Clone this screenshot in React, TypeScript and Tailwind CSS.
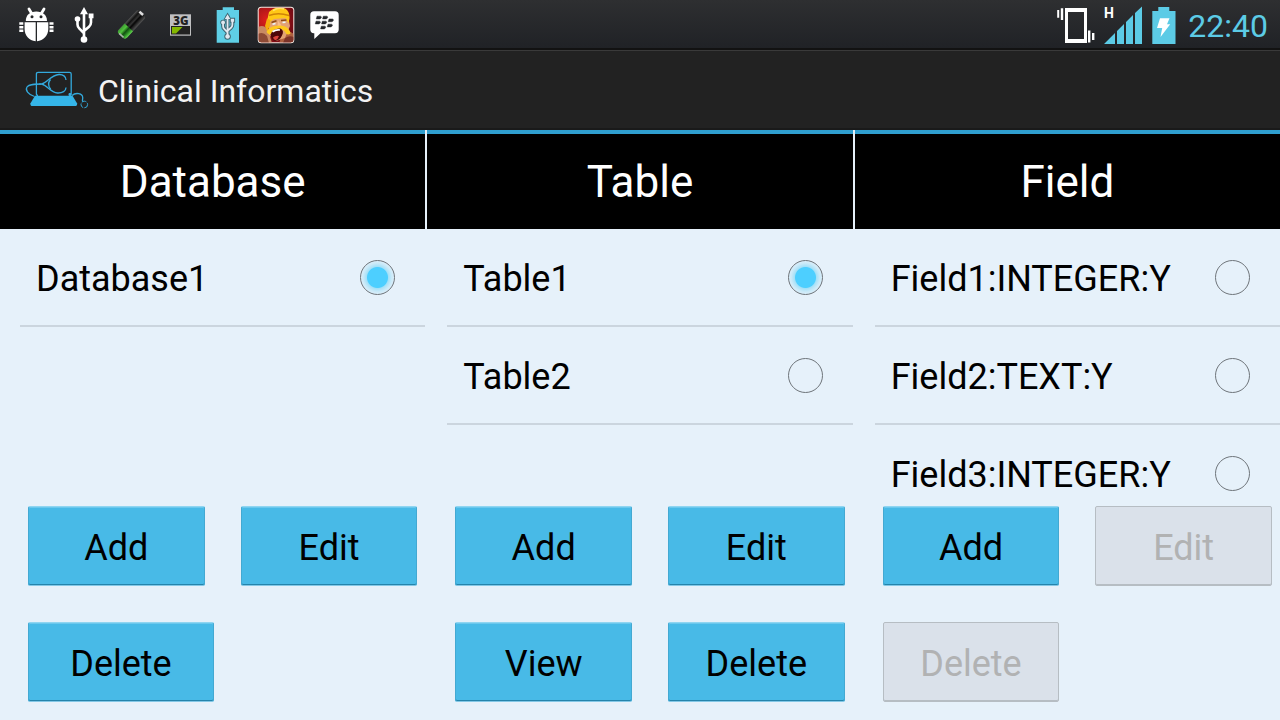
import { useState } from 'react';

const ICON = 'h-12 w-12 shrink-0';

function BugIcon() {
  return (
    <svg viewBox="0 0 48 48" className={ICON} fill="#fff" aria-hidden="true">
      <path d="M17 8l3 5M32 8l-3 5" stroke="#fff" strokeWidth="2.800" strokeLinecap="round" />
      <path d="M13.800 20c0-6 4.200-9.500 10.500-9.500S35 14 35 20z" />
      <circle cx="20" cy="15.800" r="1.500" fill="#26282a" />
      <circle cx="29" cy="15.800" r="1.500" fill="#26282a" />
      <path d="M12.600 21.200h11.100V40.300C17 39.500 12.600 34.500 12.600 28zM25 21.200h11.300V28c0 6.500-4.800 11.500-11.300 12.300z" />
      <path d="M7.300 22.600h4M7.300 26.200h4M7.300 29.800h4M37.500 22.600h4M37.500 26.200h4M37.500 29.800h4" stroke="#fff" strokeWidth="2.500" />
    </svg>
  );
}

function UsbShape() {
  return (
    <>
      <path d="M24 10v28M17.500 18v5.500c0 2 .6 3 2 4.200l4.500 4.600M31 16v5.500c0 2-.6 3-2 4.200L24 30" fill="none" stroke="currentColor" strokeWidth="2.600" />
      <path d="M24 6l4 7.200h-8zM28.700 12.600h4.800v4.600h-4.800z" fill="currentColor" />
      <circle cx="17.500" cy="18" r="2.800" fill="currentColor" />
      <circle cx="24" cy="38.500" r="3.300" fill="currentColor" />
    </>
  );
}

function UsbIcon() {
  return (
    <svg viewBox="0 0 48 48" className="h-12 w-12 shrink-0 text-white" aria-hidden="true">
      <UsbShape />
    </svg>
  );
}

function CellIcon() {
  return (
    <svg viewBox="0 0 48 48" className={ICON} aria-hidden="true">
      <defs>
        <linearGradient id="cell" x1="0" y1="0" x2="0" y2="1">
          <stop offset="0" stopColor="#555" />
          <stop offset=".25" stopColor="#111" />
          <stop offset=".45" stopColor="#333" />
          <stop offset=".6" stopColor="#050505" />
          <stop offset="1" stopColor="#555" />
        </linearGradient>
        <linearGradient id="cellGreen" x1="0" y1="0" x2="0" y2="1">
          <stop offset="0" stopColor="#3f9a35" />
          <stop offset=".3" stopColor="#4fc23c" />
          <stop offset=".55" stopColor="#124d11" />
          <stop offset=".75" stopColor="#2a8a22" />
          <stop offset="1" stopColor="#62d84e" />
        </linearGradient>
      </defs>
      <g transform="rotate(-47 23.500 23.500)">
        <rect x="8" y="17.800" width="31" height="11.400" rx="3" fill="url(#cell)" />
        <path d="M11 17.800h8.500v11.400H11q-3 0-3-3v-5.400q0-3 3-3z" fill="url(#cellGreen)" />
        <path d="M8.600 20.500v6" stroke="#aab5aa" strokeWidth="1.600" />
        <path d="M38.300 20.500v5" stroke="#dcdcdc" strokeWidth="2.600" />
      </g>
    </svg>
  );
}

function ThreeGIcon() {
  return (
    <svg viewBox="0 0 48 48" className={ICON} aria-hidden="true">
      <rect x="14" y="13.300" width="21" height="21.400" fill="#bfbfc1" />
      <rect x="15" y="25" width="19" height="8.500" fill="#222" />
      <path d="M16 26h10.500l-6.500 6.500h-4z" fill="#84b800" />
      <text x="25" y="23.500" textAnchor="middle" fontFamily="Open Sans, sans-serif" fontSize="11.500" fontWeight="800" fill="#222">3G</text>
    </svg>
  );
}

function UsbBatteryIcon() {
  return (
    <svg viewBox="0 0 48 48" className={ICON} aria-hidden="true">
      <path d="M18.700 6.300H30V9h5v32.700H12.700V9h6z" fill="#5fcfe6" />
      <g transform="translate(7 9) scale(.69)">
        <path d="M24 8v31M17.500 18v5.500c0 2 .6 3 2 4.200l4.500 4.600M31 14v7.500c0 2-.6 3-2 4.200L24 30" fill="none" stroke="#3d6470" strokeWidth="5.600" />
        <circle cx="17.500" cy="18" r="4" fill="#3d6470" />
        <circle cx="24" cy="38.500" r="4.700" fill="#3d6470" />
        <path d="M24 3.500l6 10.500H18zM27.300 11.200h7.600v7.400h-7.600z" fill="#3d6470" />
        <g className="text-slate-200">
          <UsbShape />
        </g>
      </g>
    </svg>
  );
}

function GameIcon() {
  return (
    <svg viewBox="0 0 48 48" className={ICON} aria-hidden="true">
      <defs>
        <clipPath id="tile">
          <rect x="6.700" y="6.700" width="34.600" height="34.600" rx="2.500" />
        </clipPath>
        <radialGradient id="red" cx=".25" cy=".35" r=".8">
          <stop offset="0" stopColor="#e0201c" />
          <stop offset="1" stopColor="#6d0a14" />
        </radialGradient>
      </defs>
      <rect x="5.700" y="5.700" width="36.600" height="36.600" rx="3.500" fill="#f3ebe4" />
      <g clipPath="url(#tile)">
        <path d="M6 6h36v36H6z" fill="url(#red)" />
        <path d="M6 26q6-3 10 3l4 13H6z" fill="#c98a63" />
        <path d="M6 33q5-3 9 2l2 7H6z" fill="#8e4a35" />
        <path d="M31 33q5-5 11 0v9H27z" fill="#b0613f" />
        <path d="M33 37q4-3 9-1v6H31z" fill="#7c3328" />
        <path d="M17 18l19-3 2 10-5 12-9 3-7-6z" fill="#e3a273" />
        <path d="M17 11q7-6.500 16-3.500 5 3 4.500 10l-1 5-3-5.500-11.500 1-4.500 3-2-3z" fill="#ffc816" />
        <path d="M21 9.500q6-3.500 11-1.500" stroke="#ffe568" strokeWidth="1.600" fill="none" />
        <path d="M17 14.500q9-3.500 20 0" stroke="#cf8508" strokeWidth="1.400" fill="none" />
        <path d="M15 17.500l3.500 1.500-.5 6-3 5-2-5z" fill="#f5ae0c" />
        <path d="M19.500 21.500l5-1.800M29 19.500l5.500-.5" stroke="#8d4a14" strokeWidth="1.600" />
        <path d="M20.500 23.300l3-.8M30.500 21.500l3-.3" stroke="#e9fbff" strokeWidth="1.600" />
        <path d="M26 19.500l3.500 5-4 1.200z" fill="#f6bb8b" />
        <path d="M14.500 31q2-5 8.500-6 7-1.500 11 1 4 2.500 4.500 6.500-2.500 2.200-4.500 0-1-3-4-4-8-1-11 4.500-2.500 1.500-4.500-2z" fill="#ffc91c" />
        <path d="M18.500 33.500q2.500-6.500 10-6 4 2 1.500 7-2 4.500-6.500 5.500-4.500-.5-5-6.500z" fill="#4d0709" />
        <path d="M20.500 30.800q3.500-2.600 7.500-1.800" stroke="#fff" strokeWidth="1.700" fill="none" />
        <path d="M21 36.500q3-2.500 6-1.500-1 3.500-3.500 4.200-2-.5-2.500-2.700z" fill="#d8423a" />
      </g>
    </svg>
  );
}

function ChatIcon() {
  return (
    <svg viewBox="0 0 48 48" className={ICON} aria-hidden="true">
      <path d="M14 10.300h21q3.700 0 3.700 3.700v14.500q0 3.700-3.700 3.700H20.500L14.300 38v-5.800H14q-3.700 0-3.700-3.700V14q0-3.700 3.700-3.700z" fill="#fff" />
      <path
        d="M17 15.200h3.500q1.200.4.800 1.500t-1.600 1.200h-3.400zM23.300 15.200h3.500q1.200.4.800 1.500t-1.600 1.200h-3.400zM16 20.200h3.500q1.200.4.800 1.500t-1.600 1.200h-3.400zM22.300 20.200h3.500q1.200.4.800 1.500t-1.600 1.200h-3.400zM29 18h3.500q1.200.4.800 1.500t-1.600 1.200h-3.400zM28 23.200h3.500q1.200.4.800 1.500t-1.600 1.200h-3.400zM21.300 25.200h3.500q1.200.4.800 1.500t-1.600 1.200h-3.400z"
        fill="#25272a"
        stroke="#25272a"
        strokeWidth=".5"
      />
    </svg>
  );
}

function VibrateIcon() {
  return (
    <svg viewBox="0 0 40 48" className="h-12 w-10 shrink-0" fill="#fff" aria-hidden="true">
      <path fillRule="evenodd" d="M9 7h22v35H9zM12 11v27h16V11z" />
      <path d="M1.200 9h2v7.700h-2zM4.800 7.200h2.400V19H4.800zM32 29.500h2.400v12H32zM36 32h2.400v7H36z" />
    </svg>
  );
}

function SignalIcon() {
  return (
    <svg viewBox="0 0 40 48" className="ml-2 h-12 w-10 shrink-0" fill="#5ccbe6" aria-hidden="true">
      <path d="M0 43L11 32v11zM13 30l7-7v20h-7zM22 21l7-7v29h-7zM31 12l7-6.500V43h-7z" />
      <text x="0" y="16.800" fontFamily="Roboto, sans-serif" fontSize="14" fontWeight="700" fill="#fff">H</text>
    </svg>
  );
}

function ChargeIcon() {
  return (
    <svg viewBox="0 0 24 48" className="ml-2 h-12 w-6 shrink-0" aria-hidden="true">
      <path d="M6.300 6h11v4h6.200v33H.3V10h6z" fill="#5ccbe6" />
      <path d="M8 17.300h9.500l-2.500 6h3.200L8.500 36l1.700-9H5z" fill="#fff" />
    </svg>
  );
}

function AppLogo() {
  return (
    <svg viewBox="0 0 66 42" className="h-[42px] w-[66px] shrink-0" fill="none" stroke="#33a9dc" aria-hidden="true">
      <path d="M14 26.500q-1.600 0-1.600-2V5q0-1.700 1.700-1.700H45.500q1.700 0 1.700 1.700v19.500q0 2-1.500 2" strokeWidth="1.300" />
      <path d="M11 26.700h37.500l4.500 7.500q.6 2.800-2 2.800H8.500q-2.600 0-2-2.800z" fill="#35b5e8" stroke="none" />
      <path d="M10.500 27.500C4 25.500 1 21 3 18c2-3 8-3 14.500-3" strokeWidth="1.300" />
      <path d="M15 15.200h5M17.500 14.800c6-1 9-8.500 17.500-9.300 4-.2 7 2 7 5.500M17.500 15.200c6 1 8.500 8 16 8.800 5 .2 8.500-2 8.500-5.500" strokeWidth="1.300" />
      <path d="M26.500 10.500q-4 4.800.2 9.500" strokeWidth="1.300" />
      <path d="M45 24.500h2v2h-2z" fill="#35b5e8" />
      <path d="M48 26.500c4-3.500 10.500-2 10.700 2 .2 2-.8 3 0 4" strokeWidth="1.300" />
      <circle cx="60.300" cy="35.500" r="3.300" strokeWidth="1" strokeDasharray="5 1.200" />
    </svg>
  );
}

type Action = { label: string; disabled?: boolean; wide?: boolean };
type Panel = { title: string; items: string[]; selected: string; actions: Action[] };

const PANELS: Panel[] = [
  {
    title: 'Database',
    items: ['Database1'],
    selected: 'Database1',
    actions: [{ label: 'Add' }, { label: 'Edit' }, { label: 'Delete', wide: true }],
  },
  {
    title: 'Table',
    items: ['Table1', 'Table2'],
    selected: 'Table1',
    actions: [{ label: 'Add' }, { label: 'Edit' }, { label: 'View' }, { label: 'Delete' }],
  },
  {
    title: 'Field',
    items: ['Field1:INTEGER:Y', 'Field2:TEXT:Y', 'Field3:INTEGER:Y'],
    selected: '',
    actions: [{ label: 'Add' }, { label: 'Edit', disabled: true }, { label: 'Delete', disabled: true }],
  },
];

function Column({ title, items, selected, actions }: Panel) {
  const [value, setValue] = useState(selected);
  return (
    <section className="flex min-h-0 min-w-0 flex-col">
      <h2 className="border-t-4 border-[#2f9fd0] bg-black pb-5 pt-[22px] text-center text-[44px] leading-[53px] text-white">
        {title}
      </h2>
      <ul className="min-h-0 flex-1 overflow-y-auto pl-5 [scrollbar-width:none]">
        {items.map((item) => (
          <li key={item} className="border-b-2 border-[#cbd5de]">
            <label className="flex h-24 items-center justify-between pl-4 pr-[30px] text-[36px]">
              <span className="whitespace-nowrap pt-1">{item}</span>
              <input
                type="radio"
                name={title}
                checked={value === item}
                onChange={() => setValue(item)}
                className="h-[35px] w-[35px] shrink-0 appearance-none rounded-full border border-[#6f757a] checked:bg-[radial-gradient(circle,#4dcfff_0px,#4dcfff_10px,#a5e1f8_11px,#c8e9f8_14px,#deeffa_17px)]"
              />
            </label>
          </li>
        ))}
      </ul>
      <div className="grid grid-cols-2 gap-9 pb-[18px] pl-7 pr-2 pt-2">
        {actions.map(({ label, disabled, wide }) => (
          <button
            key={label}
            type="button"
            disabled={disabled}
            className={`h-20 rounded-[2px] border pt-1 text-[36px] leading-none ${wide ? 'w-[186px]' : 'w-full'} ${
              disabled
                ? 'border-[#b6bdc3] bg-[#dae1ea] text-[#b1b2b3] shadow-[inset_0_-1px_0_#b6bdc3]'
                : 'border-x-[#43a9d2] border-b-[#84c8e6] border-t-[#8fd5f1] bg-[#48bae7] text-black shadow-[inset_0_-1px_0_#2584ab,inset_0_1px_0_#6cc8ed]'
            }`}
          >
            {label}
          </button>
        ))}
      </div>
    </section>
  );
}

export default function App() {
  return (
    <div className="flex h-screen flex-col bg-[#e6f1fa] font-[Roboto,sans-serif]">
      <div className="flex h-[50px] shrink-0 items-center justify-between border-b-2 border-[#121212] bg-linear-to-b from-[#2e2f31] to-[#202226] pl-3 pr-3 pt-[2px]">
        <div className="flex">
          <BugIcon />
          <UsbIcon />
          <CellIcon />
          <ThreeGIcon />
          <UsbBatteryIcon />
          <GameIcon />
          <ChatIcon />
        </div>
        <div className="flex items-center">
          <VibrateIcon />
          <SignalIcon />
          <ChargeIcon />
          <time className="ml-3 pt-[2px] text-[32px] leading-10 text-[#5ccbe6]">22:40</time>
        </div>
      </div>
      <header className="flex h-20 shrink-0 items-center gap-2 border-b-2 border-t border-b-[#1a1a1a] border-t-[#3a3a3a] bg-[#222] pl-6">
        <AppLogo />
        <h1 className="pt-[2px] text-[32px] leading-10 text-[#f3f3f3]">Clinical Informatics</h1>
      </header>
      <main className="grid min-h-0 flex-1 grid-cols-3 gap-[2px]">
        {PANELS.map((panel) => (
          <Column key={panel.title} {...panel} />
        ))}
      </main>
    </div>
  );
}
